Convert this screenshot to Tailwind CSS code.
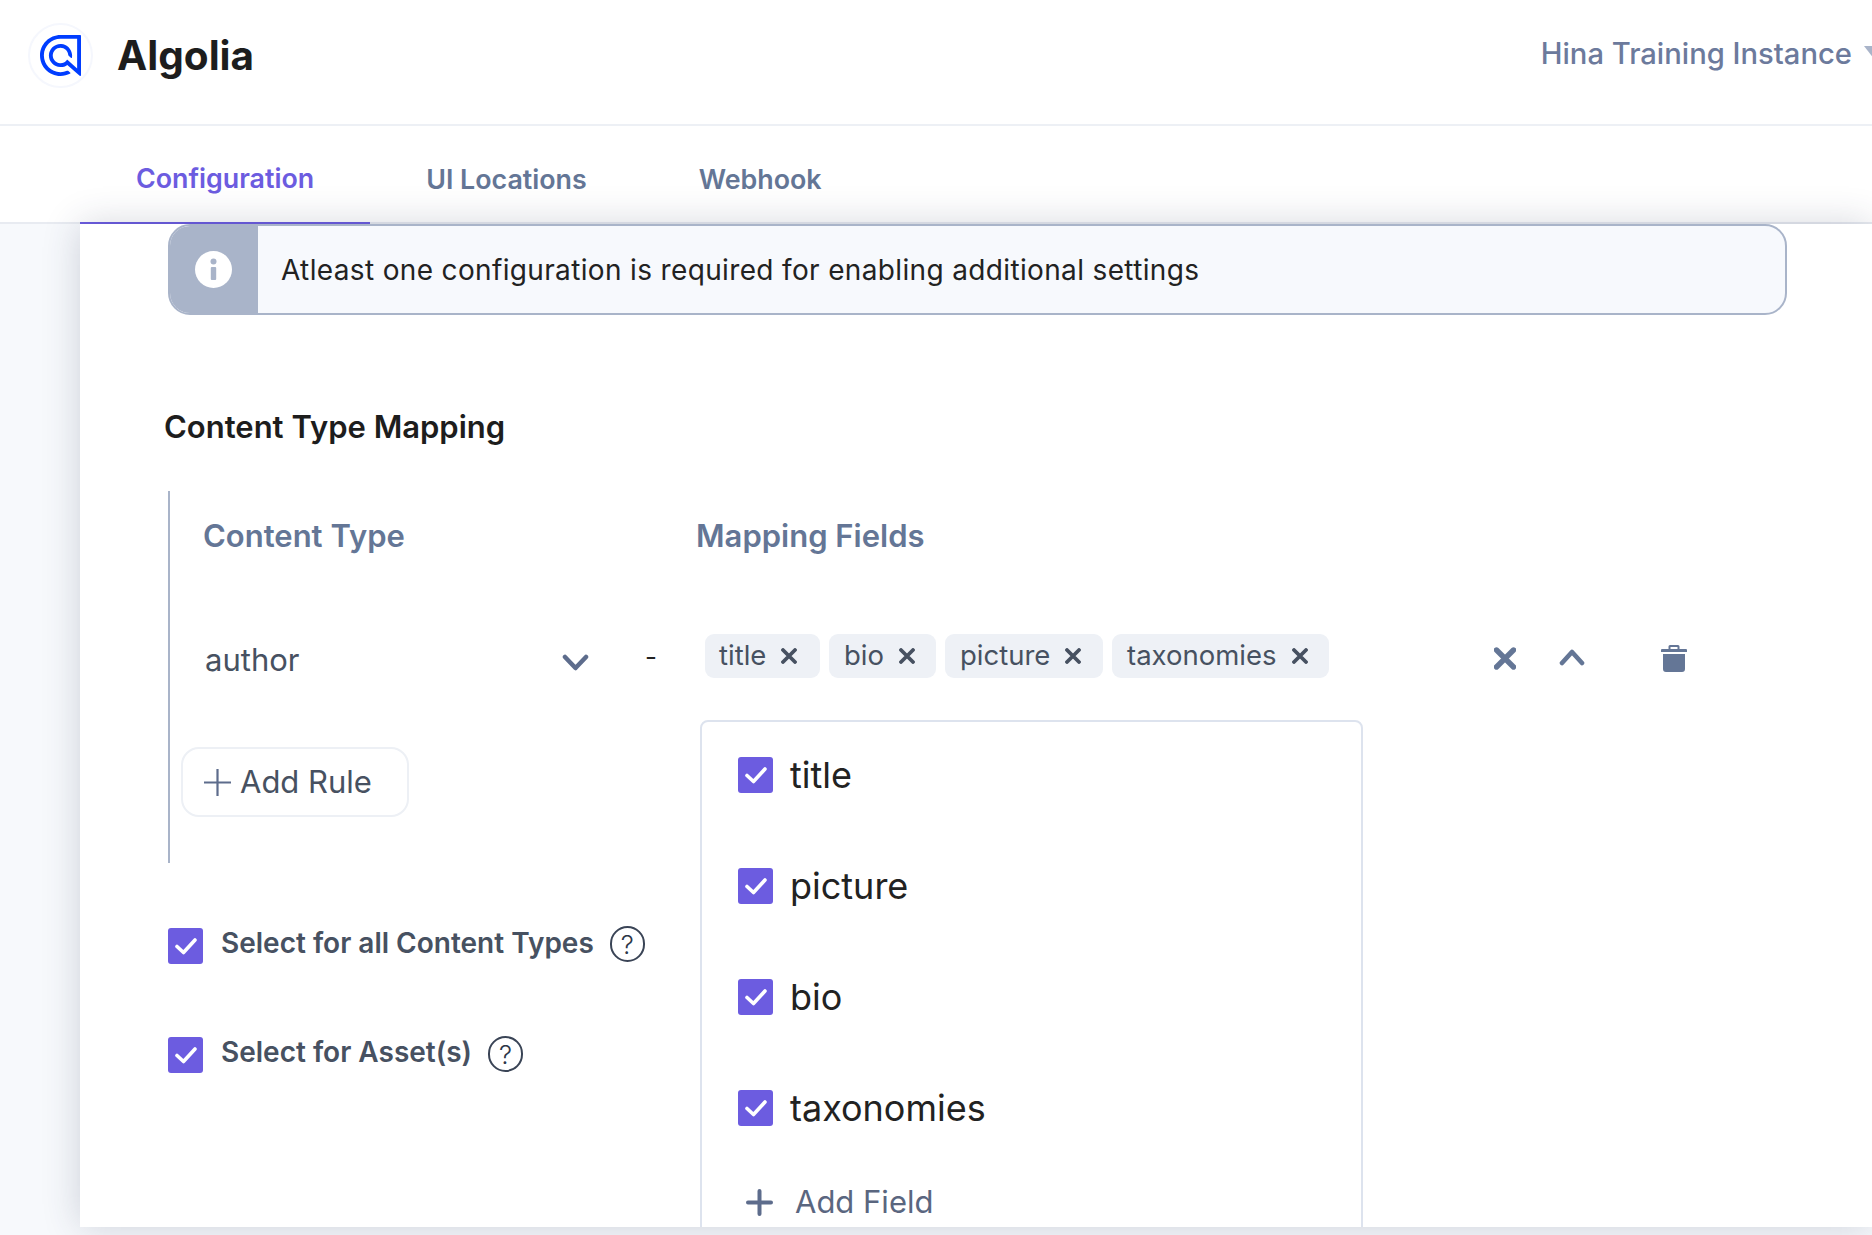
<!DOCTYPE html>
<html lang="en">
<head>
    <meta charset="UTF-8">
    <title>Algolia</title>
    <script src="https://cdn.jsdelivr.net/npm/@tailwindcss/browser@4"></script>
</head>
<body class="font-[Inter,sans-serif] bg-[#f7f9fc] h-[1235px] w-[1872px] overflow-hidden flex flex-col">
    <!-- top bar -->
    <header class="h-[126px] shrink-0 bg-white border-b-2 border-[#edf0f5] flex items-center justify-between">
        <div class="flex items-center ml-[28px] -mt-[14px]">
            <div class="w-[65px] h-[65px] rounded-full border-2 border-[#f5f7fd] flex items-center justify-center">
                <svg class="w-[41px] h-[41px]" viewBox="0 0 500 500" fill="#003dff"><path d="M250,0C113.38,0,2,110.16,.03,246.32c-2,138.29,110.19,252.87,248.49,253.67,42.71,.25,83.85-10.2,120.38-30.05,3.56-1.93,4.11-6.83,1.08-9.52l-23.39-20.74c-4.75-4.22-11.52-5.41-17.37-2.92-25.5,10.85-53.21,16.39-81.76,16.04-111.75-1.37-202.04-94.35-200.26-206.1,1.76-110.33,92.06-199.55,202.8-199.55h202.83V407.68l-115.08-102.25c-3.72-3.31-9.43-2.66-12.43,1.31-18.47,24.46-48.56,39.67-81.98,37.36-46.36-3.2-83.92-40.52-87.4-86.86-4.15-55.28,39.65-101.58,94.07-101.58,49.21,0,89.74,37.88,93.97,86.01,.38,4.28,2.31,8.28,5.53,11.13l29.97,26.57c3.4,3.01,8.8,1.17,9.63-3.3,2.16-11.55,2.92-23.6,2.07-35.95-4.83-70.39-61.84-127.01-132.26-131.35-80.73-4.98-148.23,58.18-150.37,137.35-2.09,77.15,61.12,143.66,138.28,145.36,32.21,.71,62.07-9.42,86.2-26.97l150.36,133.29c6.45,5.71,16.62,1.14,16.62-7.48V9.49C500,4.25,495.75,0,490.51,0H250Z"/></svg>
            </div>
            <span class="ml-[24px] mt-[2px] text-[40.5px] leading-[44px] font-bold text-[#1d1d1d]">Algolia</span>
        </div>
        <div class="flex items-center -mt-[17px] -mr-[14px]">
            <span class="text-[29.2px] font-medium text-[#6c7a9c]">Hina Training Instance</span>
            <svg class="ml-[12px] w-[22px] h-[14px]" viewBox="0 0 22 14" fill="#a9b4c9"><path d="M0 0h22L11 14z"/></svg>
        </div>
    </header>

    <!-- tabs -->
    <nav class="h-[98px] shrink-0 bg-white border-b-2 border-[#e8ebf1] flex pl-[80px]">
        <a class="h-[98px] px-[56px] pt-[8px] flex items-center text-[26.8px] font-semibold text-[#6c5ce0] border-b-2 border-[#6c5ce0]">Configuration</a>
        <a class="h-[98px] px-[56px] pt-[8px] flex items-center text-[26.8px] font-semibold text-[#647696]">UI Locations</a>
        <a class="h-[98px] px-[56px] pt-[8px] flex items-center text-[26.8px] font-semibold text-[#647696]">Webhook</a>
    </nav>

    <main class="h-[1003px] shrink-0 ml-[80px] mb-[8px] bg-white pl-[88px] relative shadow-[0_0_36px_rgba(40,50,80,0.2)] overflow-hidden">
        <div class="w-[1619px] h-[91px] flex border-2 border-[#a9b4c9] rounded-[22px] bg-[#f7f9fd] overflow-hidden">
            <div class="w-[90px] -ml-[2px] bg-[#a9b4c9] flex items-center justify-center shrink-0">
                <svg class="w-[37px] h-[37px]" viewBox="0 0 37 37"><circle cx="18.5" cy="18.5" r="18.5" fill="#fff"/><circle cx="18.5" cy="10.5" r="3" fill="#a9b4c9"/><rect x="15.8" y="16" width="5.4" height="13" rx="1" fill="#a9b4c9"/></svg>
            </div>
            <p class="pl-[23px] flex items-center text-[28px] text-[#222222] tracking-[0.35px]">Atleast one configuration is required for enabling additional settings</p>
        </div>

        <h2 class="mt-[95px] -ml-[4px] text-[31px] leading-[34px] font-semibold text-[#1d1d1d]">Content Type Mapping</h2>

        <!-- rule block -->
        <div class="mt-[47px] h-[372px] border-l-2 border-[#a9b4c9]">
            <div class="h-[90px] pl-[33px] flex items-center text-[31px] font-semibold text-[#647696]">
                <span class="w-[493px]">Content Type</span>
                <span>Mapping Fields</span>
            </div>
            <div class="pt-[53px] pl-[35px] flex items-start">
                <div class="w-[384px] h-[44px] mt-[4px] flex items-center justify-between">
                    <span class="text-[31px] text-[#475161]">author</span>
                    <svg class="w-[27px] h-[17px] mt-[4px]" viewBox="0 0 27 17" fill="none" stroke="#5d6c8c" stroke-width="4.5" stroke-linecap="round" stroke-linejoin="round"><path d="M3 3l10.5 11L24 3"/></svg>
                </div>
                <span class="ml-[56px] w-[11px] h-[44px] flex items-center text-[26px] text-[#222222]">-</span>
                <div class="ml-[49px] relative flex gap-[9px]">
                    <span class="h-[44px] w-[115px] pl-[14px] rounded-[9px] bg-[#eef1f6] flex items-center gap-[15px] text-[27.5px] text-[#475161]">title
                        <svg class="w-[16px] h-[16px]" viewBox="0 0 16 16" stroke="#475161" stroke-width="3.8" stroke-linecap="round"><path d="M2 2l12 12M14 2L2 14"/></svg>
                    </span>
                    <span class="h-[44px] w-[107px] pl-[15px] rounded-[9px] bg-[#eef1f6] flex items-center gap-[15px] text-[27.5px] text-[#475161]">bio
                        <svg class="w-[16px] h-[16px]" viewBox="0 0 16 16" stroke="#475161" stroke-width="3.8" stroke-linecap="round"><path d="M2 2l12 12M14 2L2 14"/></svg>
                    </span>
                    <span class="h-[44px] w-[158px] pl-[15px] rounded-[9px] bg-[#eef1f6] flex items-center gap-[15px] text-[27.5px] text-[#475161]">picture
                        <svg class="w-[16px] h-[16px]" viewBox="0 0 16 16" stroke="#475161" stroke-width="3.8" stroke-linecap="round"><path d="M2 2l12 12M14 2L2 14"/></svg>
                    </span>
                    <span class="h-[44px] w-[217px] pl-[15px] rounded-[9px] bg-[#eef1f6] flex items-center gap-[15px] text-[27.5px] text-[#475161]">taxonomies
                        <svg class="w-[16px] h-[16px]" viewBox="0 0 16 16" stroke="#475161" stroke-width="3.8" stroke-linecap="round"><path d="M2 2l12 12M14 2L2 14"/></svg>
                    </span>

                    <!-- open dropdown -->
                    <div class="absolute top-[86px] -left-[5px] w-[663px] h-[560px] bg-white border-2 border-[#dde3ee] rounded-t-[8px] pt-[35px] pl-[36px] z-10">
                        <div class="flex flex-col gap-[75px] text-[36px] text-[#222222]">
                            <label class="h-[36px] flex items-center gap-[17px]">
                                <span class="w-[35px] h-[36px] rounded-[3px] bg-[#6c5ce0] flex items-center justify-center"><svg class="w-[22px] h-[18px]" viewBox="0 0 22 18" fill="none" stroke="#fff" stroke-width="3.6" stroke-linecap="round" stroke-linejoin="round"><path d="M2 9.500l6.500 6L20 3"/></svg></span>
                                title
                            </label>
                            <label class="h-[36px] flex items-center gap-[17px]">
                                <span class="w-[35px] h-[36px] rounded-[3px] bg-[#6c5ce0] flex items-center justify-center"><svg class="w-[22px] h-[18px]" viewBox="0 0 22 18" fill="none" stroke="#fff" stroke-width="3.6" stroke-linecap="round" stroke-linejoin="round"><path d="M2 9.500l6.500 6L20 3"/></svg></span>
                                picture
                            </label>
                            <label class="h-[36px] flex items-center gap-[17px]">
                                <span class="w-[35px] h-[36px] rounded-[3px] bg-[#6c5ce0] flex items-center justify-center"><svg class="w-[22px] h-[18px]" viewBox="0 0 22 18" fill="none" stroke="#fff" stroke-width="3.6" stroke-linecap="round" stroke-linejoin="round"><path d="M2 9.500l6.500 6L20 3"/></svg></span>
                                bio
                            </label>
                            <label class="h-[36px] flex items-center gap-[17px]">
                                <span class="w-[35px] h-[36px] rounded-[3px] bg-[#6c5ce0] flex items-center justify-center"><svg class="w-[22px] h-[18px]" viewBox="0 0 22 18" fill="none" stroke="#fff" stroke-width="3.6" stroke-linecap="round" stroke-linejoin="round"><path d="M2 9.500l6.500 6L20 3"/></svg></span>
                                taxonomies
                            </label>
                        </div>
                        <div class="mt-[61px] ml-[8px] h-[30px] flex items-center gap-[22px] text-[31px] text-[#5a667f]">
                            <svg class="w-[27px] h-[27px]" viewBox="0 0 27 27" stroke="#5d6c8c" stroke-width="4" stroke-linecap="round"><path d="M13.5 2v23M2 13.5h23"/></svg>
                            Add Field
                        </div>
                    </div>
                </div>

                <!-- row actions -->
                <svg class="ml-[165px] mt-[13px] w-[22px] h-[23px]" viewBox="0 0 22 23" stroke="#647696" stroke-width="5.4" stroke-linecap="round"><path d="M2.500 3l17 17M19.500 3l-17 17"/></svg>
                <svg class="ml-[43px] mt-[15px] w-[26px] h-[17px]" viewBox="0 0 26 17" fill="none" stroke="#647696" stroke-width="4.6" stroke-linecap="round" stroke-linejoin="round"><path d="M3 14L13 3l10 11"/></svg>
                <svg class="ml-[76px] mt-[11px] w-[26px] h-[27px]" viewBox="0 0 26 27" fill="#647696"><path d="M9 0h8a1.5 1.5 0 0 1 1.5 1.5V4H25a1 1 0 0 1 1 1v2H0V5a1 1 0 0 1 1-1h6.500V1.500A1.500 1.500 0 0 1 9 0zm.5 2v2h7V2zM2 9h22v15a3 3 0 0 1-3 3H5a3 3 0 0 1-3-3z"/></svg>
            </div>
            <button class="mt-[65px] ml-[11px] w-[228px] h-[70px] border-2 border-[#edf0f5] rounded-[18px] flex items-center pl-[21px] gap-[9px] text-[31px] text-[#475161]">
                <svg class="w-[27px] h-[27px]" viewBox="0 0 27 27" stroke="#5d6c8c" stroke-width="2.2"><path d="M13.500 0v27M0 13.500h27"/></svg>
                Add Rule
            </button>
        </div>

        <!-- scope checkboxes -->
        <div class="mt-[65px] flex items-start gap-[18px]">
            <span class="w-[35px] h-[36px] rounded-[3px] bg-[#6c5ce0] flex items-center justify-center"><svg class="w-[22px] h-[18px]" viewBox="0 0 22 18" fill="none" stroke="#fff" stroke-width="3.6" stroke-linecap="round" stroke-linejoin="round"><path d="M2 9.500l6.500 6L20 3"/></svg></span>
            <span class="text-[28px] leading-[30px] font-semibold text-[#475161]">Select for all Content Types</span>
            <span class="-ml-[2px] -mt-[2px] w-[35px] h-[36px] rounded-full border-2 border-[#3a4456] flex items-center justify-center text-[26px] font-light text-[#2c3648]">?</span>
        </div>
        <div class="mt-[73px] flex items-start gap-[18px]">
            <span class="w-[35px] h-[36px] rounded-[3px] bg-[#6c5ce0] flex items-center justify-center"><svg class="w-[22px] h-[18px]" viewBox="0 0 22 18" fill="none" stroke="#fff" stroke-width="3.6" stroke-linecap="round" stroke-linejoin="round"><path d="M2 9.500l6.500 6L20 3"/></svg></span>
            <span class="text-[28px] leading-[30px] font-semibold text-[#475161]">Select for Asset(s)</span>
            <span class="-ml-[2px] -mt-[1px] w-[35px] h-[36px] rounded-full border-2 border-[#3a4456] flex items-center justify-center text-[26px] font-light text-[#2c3648]">?</span>
        </div>
    </main>
</body>
</html>
